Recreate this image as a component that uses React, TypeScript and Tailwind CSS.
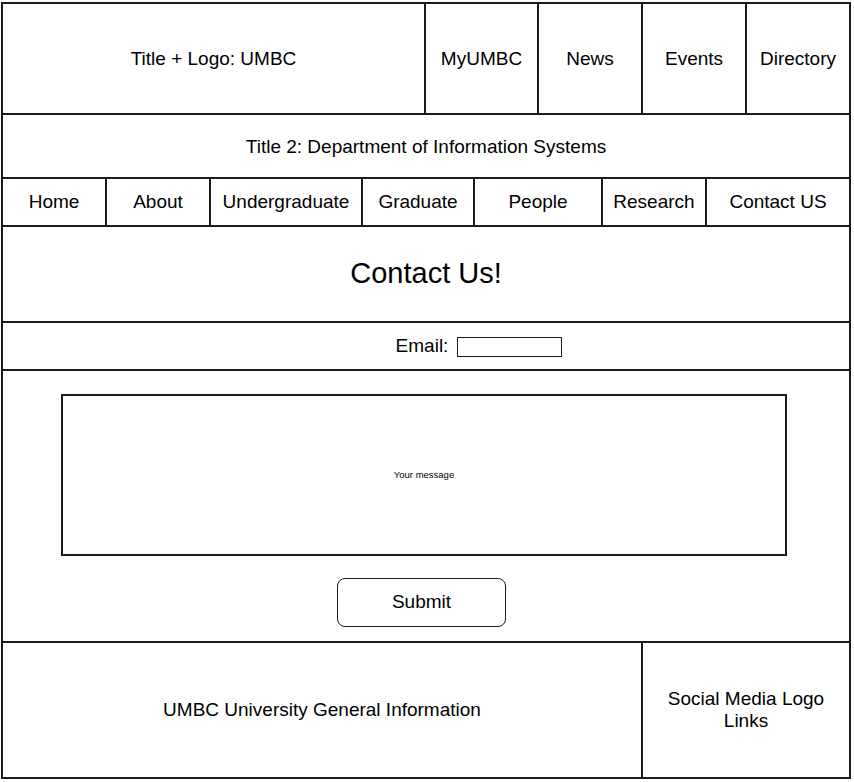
const topLinks = [
  { label: 'MyUMBC', w: 'w-[113px]' },
  { label: 'News', w: 'w-[104px]' },
  { label: 'Events', w: 'w-[104px]' },
  { label: 'Directory', w: 'flex-1' },
]

const navLinks = [
  { label: 'Home', w: 'w-[102px]' },
  { label: 'About', w: 'w-[104px]' },
  { label: 'Undergraduate', w: 'w-[152px]' },
  { label: 'Graduate', w: 'w-[112px]' },
  { label: 'People', w: 'w-[128px]' },
  { label: 'Research', w: 'w-[104px]' },
  { label: 'Contact US', w: 'flex-1' },
]

export default function App() {
  return (
    <div className="min-h-screen bg-white pl-px pt-[2px] font-['Liberation_Sans',Arial,sans-serif] text-black">
      <div className="flex w-[850px] flex-col border-2 border-[#1a1a1a]">
        {/* header */}
        <div className="flex h-[111px] border-b-2 border-[#1a1a1a]">
          <div className="flex w-[421px] items-center justify-center pt-[2px] text-[19px]">Title + Logo: UMBC</div>
          {topLinks.map(link => (
            <div
              key={link.label}
              className={`${link.w} flex items-center justify-center border-l-2 border-[#1a1a1a] pt-[2px] text-[19px]`}
            >
              {link.label}
            </div>
          ))}
        </div>

        <div className="flex h-[64px] items-center justify-center border-b-2 border-[#1a1a1a] pt-[2px] text-[19px]">
          Title 2: Department of Information Systems
        </div>

        {/* nav */}
        <div className="flex h-[48px] border-b-2 border-[#1a1a1a]">
          {navLinks.map((link, i) => (
            <div
              key={link.label}
              className={`${link.w} flex items-center justify-center pt-[1px] text-[19px] ${i > 0 ? 'border-l-2 border-[#1a1a1a]' : ''}`}
            >
              {link.label}
            </div>
          ))}
        </div>

        <div className="flex h-[96px] items-center justify-center border-b-2 border-[#1a1a1a] text-[29px]">
          Contact Us!
        </div>

        <div className="flex h-[48px] items-center justify-center border-b-2 border-[#1a1a1a] pl-[106px] text-[19px]">
          <span>Email:</span>
          <div className="ml-[9px] mt-[2px] h-[20px] w-[105px] border-[1.5px] border-[#1a1a1a]" />
        </div>

        {/* message */}
        <div className="flex h-[272px] flex-col items-start border-b-2 border-[#1a1a1a] pl-[58px] pt-[23px]">
          <div className="flex h-[162px] w-[726px] items-center justify-center border-2 border-[#1a1a1a] text-[9.5px]">
            Your message
          </div>
          <button className="ml-[276px] mt-[22px] h-[49px] w-[169px] rounded-[8px] border-[1.5px] border-[#1a1a1a] text-[19px]">
            Submit
          </button>
        </div>

        {/* footer */}
        <div className="flex h-[134px]">
          <div className="flex w-[638px] items-center justify-center pt-[1px] text-[19px]">UMBC University General Information</div>
          <div className="flex flex-1 items-center justify-center border-l-2 border-[#1a1a1a] text-center text-[19px] leading-[22px]">
            Social Media Logo
            <br />
            Links
          </div>
        </div>
      </div>
    </div>
  )
}
